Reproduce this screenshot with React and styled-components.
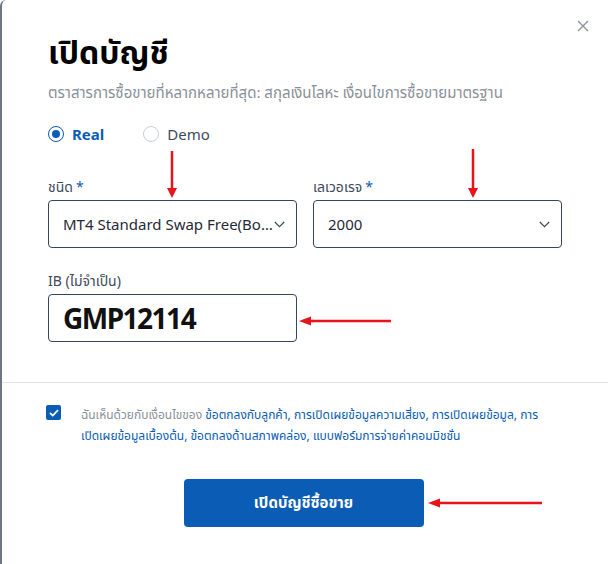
import React, { useState } from 'react'
import styled, { createGlobalStyle } from 'styled-components'

const GlobalStyle = createGlobalStyle`
  html, body {
    margin: 0;
    padding: 0;
    background: #ffffff;
  }
  body {
    font-family: 'Noto Sans', 'Noto Sans Thai', sans-serif;
    color: #1f2a37;
  }
`

const Modal = styled.div`
  position: relative;
  box-sizing: border-box;
  width: 608px;
  height: 564px;
  background: #fff;
  border-left: 2px solid #6b7785;
  border-top-left-radius: 6px;
  display: flex;
  flex-direction: column;
`

const CloseButton = styled.button`
  position: absolute;
  top: 19px;
  right: 18px;
  width: 14px;
  height: 14px;
  padding: 0;
  border: none;
  background: none;
  cursor: pointer;
`

const Body = styled.div`
  padding: 30px 47px 0 46px;
`

const Title = styled.h1`
  margin: 0;
  font-size: 32px;
  line-height: 44px;
  font-weight: 700;
  color: #000;
`

const Subtitle = styled.p`
  margin: 8px 0 0;
  font-size: 15px;
  line-height: 20px;
  color: #8a9099;
`

const RadioRow = styled.div`
  display: flex;
  gap: 39px;
  margin-top: 22px;
`

const RadioOption = styled.label`
  display: flex;
  align-items: center;
  gap: 8px;
  font-size: 15px;
  line-height: 20px;
  font-weight: ${(p) => (p.$checked ? 700 : 400)};
  color: ${(p) => (p.$checked ? '#0b5cb5' : '#3d4a5a')};
  cursor: pointer;
`

const RadioDot = styled.span`
  box-sizing: border-box;
  width: 16px;
  height: 16px;
  border-radius: 50%;
  border: 1.5px solid ${(p) => (p.$checked ? '#0b5cb5' : '#c9ced6')};
  display: flex;
  align-items: center;
  justify-content: center;
  &::after {
    content: '';
    width: 8px;
    height: 8px;
    border-radius: 50%;
    background: ${(p) => (p.$checked ? '#0b5cb5' : 'transparent')};
  }
`

const FieldGrid = styled.div`
  display: grid;
  grid-template-columns: 249px 249px;
  column-gap: 16px;
  row-gap: 23px;
  margin-top: 33px;
`

const Field = styled.div`
  display: flex;
  flex-direction: column;
  gap: 3px;
`

const Label = styled.span`
  font-size: 14px;
  line-height: 20px;
  color: #3d4a5a;
`

const Required = styled.span`
  color: #0b5cb5;
  margin-left: 3px;
`

const Box = styled.div`
  box-sizing: border-box;
  height: 48px;
  border: 1px solid #34475c;
  border-radius: 4px;
  display: flex;
  align-items: center;
  padding: 0 11px 0 14px;
`

const BoxText = styled.span`
  flex: 1;
  min-width: 0;
  white-space: nowrap;
  overflow: hidden;
  text-overflow: ${(p) => (p.$ellipsis ? 'ellipsis' : 'clip')};
  font-size: ${(p) => (p.$big ? '28px' : '15px')};
  font-weight: ${(p) => (p.$big ? 700 : 400)};
  color: ${(p) => (p.$big ? '#111' : '#1f2a37')};
  letter-spacing: ${(p) => (p.$big ? '-1.5px' : '0')};
`

const Divider = styled.hr`
  margin: 40px 0 0;
  border: none;
  border-top: 1px solid #dfe2e8;
`

const Footer = styled.div`
  padding: 21px 47px 0 44px;
  display: flex;
  flex-direction: column;
`

const AgreeRow = styled.label`
  display: flex;
  align-items: flex-start;
  gap: 20px;
`

const CheckBox = styled.span`
  flex: none;
  width: 15px;
  height: 15px;
  margin-top: 1px;
  border-radius: 2px;
  background: #0b5cb5;
  display: flex;
  align-items: center;
  justify-content: center;
`

const AgreeText = styled.p`
  margin: 0;
  max-width: 468px;
  font-size: 12px;
  line-height: 21px;
  color: #8a9099;
`

const Link = styled.span`
  color: #0b5cb5;
`

const SubmitButton = styled.button`
  align-self: center;
  margin-top: 33px;
  width: 240px;
  height: 48px;
  border: none;
  border-radius: 4px;
  background: #0b5cb5;
  color: #fff;
  font-family: inherit;
  font-size: 15px;
  font-weight: 700;
  cursor: pointer;
`

const Arrow = styled.svg`
  position: absolute;
  overflow: visible;
  pointer-events: none;
`

const Chevron = () => (
  <svg width="11" height="7" viewBox="0 0 11 7" style={{ flex: 'none' }}>
    <path d="M0.8 1 L5.5 5.7 L10.2 1" fill="none" stroke="#3d4a5a" strokeWidth="1.2" />
  </svg>
)

const DownArrow = ({ x, y1, y2 }) => (
  <Arrow style={{ left: x - 5, top: y1 }} width="10" height={y2 - y1}>
    <line x1="5" y1="0" x2="5" y2={y2 - y1 - 8} stroke="#e8141a" strokeWidth="2.5" />
    <polygon points={`0,${y2 - y1 - 10} 10,${y2 - y1 - 10} 5,${y2 - y1}`} fill="#e8141a" />
  </Arrow>
)

const LeftArrow = ({ y, x1, x2 }) => (
  <Arrow style={{ left: x1, top: y - 5 }} width={x2 - x1} height="10">
    <line x1="10" y1="5" x2={x2 - x1} y2="5" stroke="#e8141a" strokeWidth="2.5" />
    <polygon points="0,5 12,0.5 12,9.5" fill="#e8141a" />
  </Arrow>
)

const App = () => {
  const [mode, setMode] = useState('real')

  return (
    <>
      <GlobalStyle />
      <Modal>
        <CloseButton aria-label="close">
          <svg width="14" height="14" viewBox="0 0 14 14">
            <path d="M2 2 L12 12 M12 2 L2 12" stroke="#8a929c" strokeWidth="1.4" />
          </svg>
        </CloseButton>

        <Body>
          <Title>เปิดบัญชี</Title>
          <Subtitle>ตราสารการซื้อขายที่หลากหลายที่สุด: สกุลเงินโลหะ เงื่อนไขการซื้อขายมาตรฐาน</Subtitle>

          <RadioRow>
            <RadioOption $checked={mode === 'real'} onClick={() => setMode('real')}>
              <RadioDot $checked={mode === 'real'} />
              Real
            </RadioOption>
            <RadioOption $checked={mode === 'demo'} onClick={() => setMode('demo')}>
              <RadioDot $checked={mode === 'demo'} />
              Demo
            </RadioOption>
          </RadioRow>

          <FieldGrid>
            <Field>
              <Label>
                ชนิด<Required>*</Required>
              </Label>
              <Box>
                <BoxText $ellipsis>MT4 Standard Swap Free(Bonus)</BoxText>
                <Chevron />
              </Box>
            </Field>
            <Field>
              <Label>
                เลเวอเรจ<Required>*</Required>
              </Label>
              <Box>
                <BoxText>2000</BoxText>
                <Chevron />
              </Box>
            </Field>
            <Field>
              <Label>IB (ไม่จำเป็น)</Label>
              <Box>
                <BoxText $big>GMP12114</BoxText>
              </Box>
            </Field>
          </FieldGrid>
        </Body>

        <Divider />

        <Footer>
          <AgreeRow>
            <CheckBox>
              <svg width="10" height="8" viewBox="0 0 10 8">
                <path d="M1 4 L3.8 6.6 L9 1.2" fill="none" stroke="#fff" strokeWidth="1.8" />
              </svg>
            </CheckBox>
            <AgreeText>
              ฉันเห็นด้วยกับเงื่อนไขของ <Link>ข้อตกลงกับลูกค้า, การเปิดเผยข้อมูลความเสี่ยง, การเปิดเผยข้อมูล, การเปิดเผยข้อมูลเบื้องต้น, ข้อตกลงด้านสภาพคล่อง, แบบฟอร์มการจ่ายค่าคอมมิชชั่น</Link>
            </AgreeText>
          </AgreeRow>
          <SubmitButton>เปิดบัญชีซื้อขาย</SubmitButton>
        </Footer>

        <DownArrow x={170} y1={151} y2={198} />
        <DownArrow x={471} y1={149} y2={198} />
        <LeftArrow y={321} x1={297} x2={389} />
        <LeftArrow y={503} x1={426} x2={540} />
      </Modal>
    </>
  )
}

export default App
